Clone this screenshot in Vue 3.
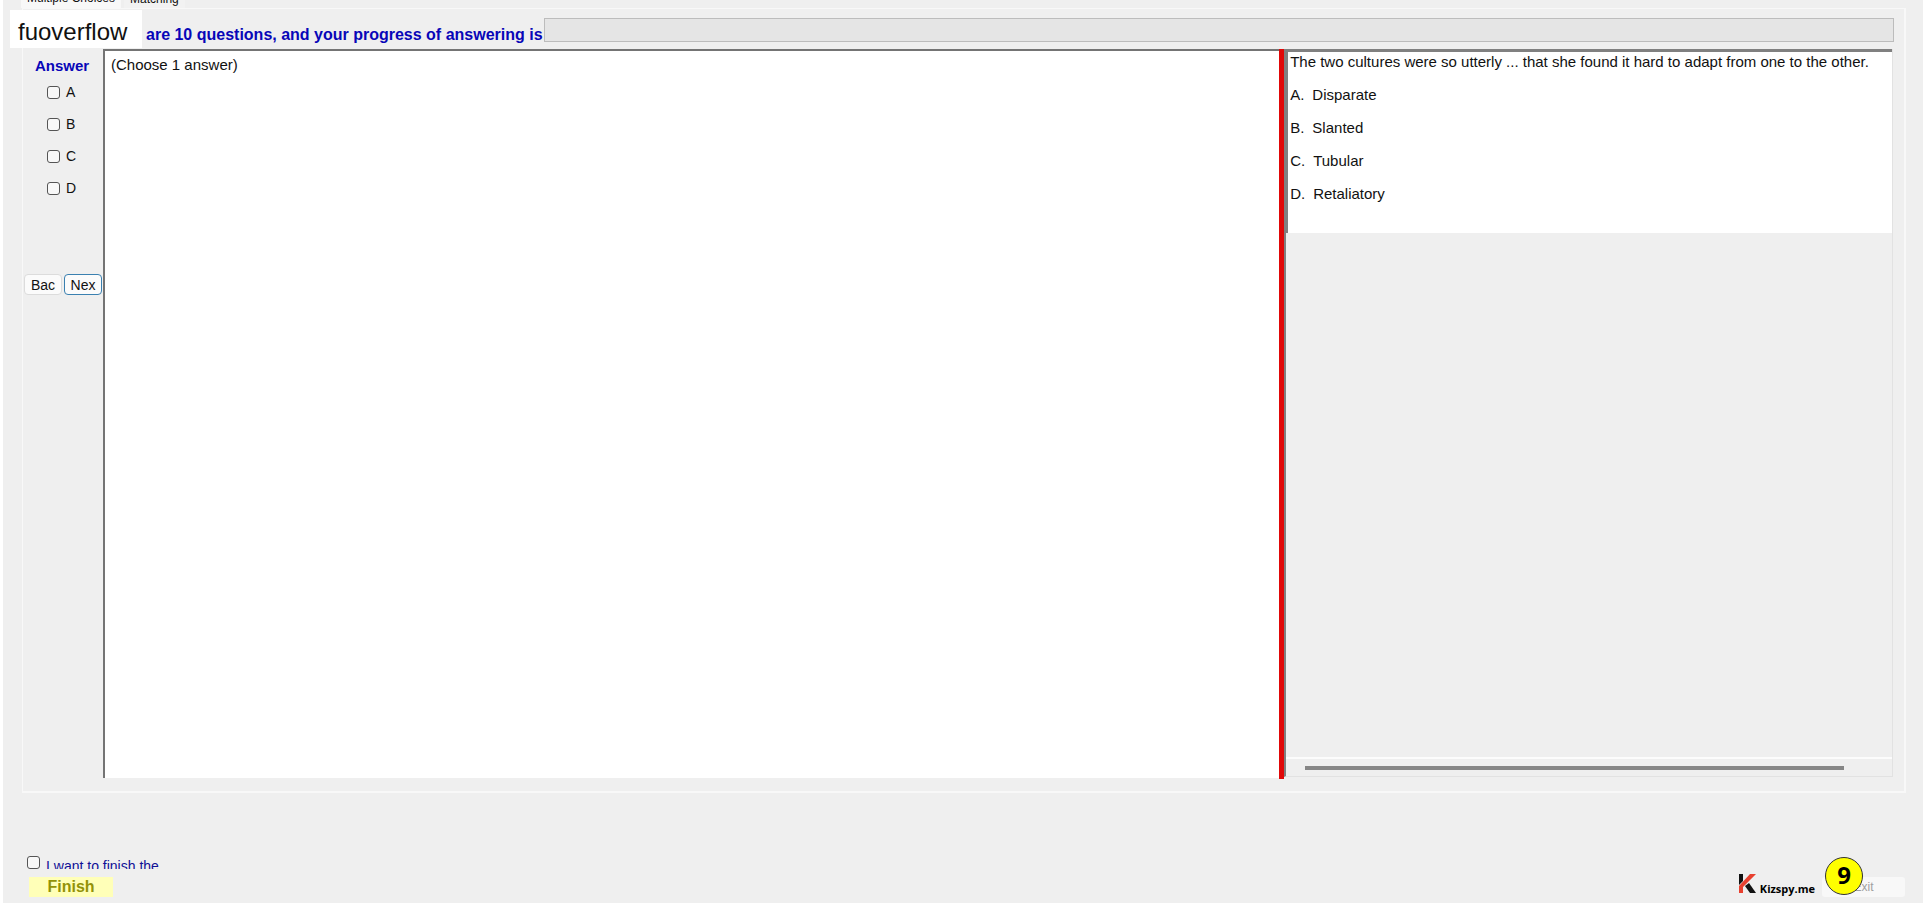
<script setup>
import { ref } from 'vue'

const tabs = ['Multiple Choices', 'Matching']
const activeTab = ref(0)
const options = [
  { key: 'A', text: 'Disparate' },
  { key: 'B', text: 'Slanted' },
  { key: 'C', text: 'Tubular' },
  { key: 'D', text: 'Retaliatory' },
]
const picked = ref([])
const finish = ref(false)
</script>

<template>
  <div class="window">
    <div class="surface">
      <nav class="tabs">
        <button
          v-for="(tab, i) in tabs"
          :key="tab"
          class="tab"
          :class="{ active: i === activeTab }"
          @click="activeTab = i"
        >{{ tab }}</button>
      </nav>

      <main class="page">
        <header class="head">
          <div class="brand">fuoverflow</div>
          <div class="summary">are 10 questions, and your progress of answering is</div>
          <div class="progress" role="progressbar" aria-label="Progress" aria-valuenow="0"></div>
        </header>

        <div class="body">
          <aside class="answers">
            <h2 class="title">Answer</h2>
            <label v-for="o in options" :key="o.key" class="choice">
              <input v-model="picked" class="tick" type="checkbox" :value="o.key">
              <span>{{ o.key }}</span>
            </label>
            <div class="moves">
              <button class="move">Bac</button>
              <button class="move next">Nex</button>
            </div>
          </aside>

          <section class="sheet">(Choose 1 answer)</section>
          <div class="splitter"></div>
          <section class="viewer">
            <div class="question">
              <p class="line">The two cultures were so utterly ... that she found it hard to adapt from one to the other.</p>
              <p v-for="o in options" :key="o.key" class="line option">
                <span>{{ o.key }}.</span><span>{{ o.text }}</span>
              </p>
            </div>
            <div class="scroll"><div class="thumb"></div></div>
          </section>
        </div>
      </main>

      <footer class="foot">
        <div class="finish">
          <label class="confirm">
            <input v-model="finish" class="tick" type="checkbox">
            <span class="confirm-text">I want to finish the</span>
          </label>
          <button class="finish-button">Finish</button>
        </div>
        <div class="corner">
          <div class="logo">
            <svg class="mark" viewBox="0 0 18 20" aria-hidden="true">
              <path d="M1 0h4v7L1 11z" fill="#111" />
              <path d="M12 0h6L5 13v6H1v-7z" fill="#e8402f" />
              <path d="M7 12l4-3 7 10h-6z" fill="#111" />
            </svg>
            <span class="logo-text">Kizspy.me</span>
          </div>
          <div class="exit-wrap">
            <button class="exit">Exit</button>
            <span class="badge">9</span>
          </div>
        </div>
      </footer>
    </div>
  </div>
</template>

<style>
body {
  margin: 0;
  background: #fff;
}
</style>

<style scoped>
.window {
  box-sizing: border-box;
  display: flex;
  min-height: 100vh;
  padding: 0 3px 3px;
  font-family: "Liberation Sans", Arial, sans-serif;
  font-size: 15px;
  color: #111;
}
.surface {
  flex: 1;
  min-width: 0;
  display: flex;
  flex-direction: column;
  background: #efefef;
}
button {
  box-sizing: border-box;
  margin: 0;
  padding: 0;
  font-family: inherit;
  color: inherit;
}
.tabs {
  display: flex;
  align-items: flex-end;
  gap: 3px;
  height: 8px;
  padding-left: 18px;
  overflow: hidden;
}
.tab {
  height: 18px;
  padding: 0 6px;
  border: 0;
  background: #f2f2f2;
  font-size: 12px;
  line-height: 18px;
}
.tab.active {
  height: 20px;
  background: #f8f8f8;
}
.page {
  flex: 1;
  display: flex;
  flex-direction: column;
  margin: 0 17px 0 19px;
  border: solid #f8f8f8;
  border-width: 1px 2px 2px 1px;
}
.head {
  display: flex;
  height: 40px;
  margin-left: -13px;
  padding-right: 10px;
}
.brand {
  box-sizing: border-box;
  width: 132px;
  height: 38px;
  margin-top: 1px;
  padding-left: 8px;
  background: #fff;
  font-size: 24px;
  line-height: 44px;
}
.summary {
  margin: 16px 1px 0 4px;
  font-size: 16px;
  font-weight: bold;
  line-height: 20px;
  white-space: nowrap;
  color: #0806b8;
}
.progress {
  box-sizing: border-box;
  flex: 1;
  height: 24px;
  margin-top: 9px;
  border: 1px solid #bcbcbc;
  background: #e5e5e5;
}
.body {
  flex: 1;
  display: flex;
  padding: 0 11px 12px 0;
}
.answers {
  flex: none;
  display: flex;
  flex-direction: column;
  width: 80px;
}
.title {
  margin: 8px 2px 9px 0;
  text-align: center;
  font-size: 15px;
  line-height: 18px;
  color: #0806b8;
}
.choice {
  display: flex;
  align-items: center;
  gap: 6px;
  height: 16px;
  margin: 0 0 16px 24px;
  font-size: 14px;
}
.tick {
  appearance: none;
  box-sizing: border-box;
  flex: none;
  width: 13px;
  height: 13px;
  margin: 0;
  border: 1px solid #555;
  border-radius: 3px;
  background: #f8f8f8;
}
.tick:checked {
  background: #3376b8;
}
.moves {
  display: flex;
  gap: 2px;
  margin: 62px 1px 0;
}
.move {
  flex: 1;
  height: 21px;
  border: 1px solid #dcdcdc;
  border-radius: 4px;
  background: #fbfbfb;
  font-size: 14px;
}
.move.next {
  border-color: #3a80b0;
}
.sheet {
  box-sizing: border-box;
  flex: 1174;
  min-width: 0;
  margin-bottom: 1px;
  padding: 4px 6px;
  border: solid #747474;
  border-width: 2px 0 0 2px;
  background: #fff;
  line-height: 20px;
}
.splitter {
  flex: none;
  width: 5px;
  background: #e00808;
}
.viewer {
  box-sizing: border-box;
  flex: 612;
  min-width: 0;
  display: flex;
  flex-direction: column;
  justify-content: space-between;
  margin-bottom: 2px;
  border: solid #e2e2e2;
  border-width: 0 1px 1px 2px;
  border-left-color: #808080;
}
.question {
  display: flex;
  flex-direction: column;
  gap: 15px;
  padding: 1px 2px 30px;
  border: solid #808080;
  border-width: 3px 0 0 2px;
  background: #fff;
}
.line {
  margin: 0;
  line-height: 18px;
  white-space: nowrap;
}
.option {
  display: flex;
  gap: 8px;
}
.scroll {
  padding: 7px 48px 6px 19px;
  border-top: 2px solid #fcfcfc;
}
.thumb {
  height: 4px;
  background: #868686;
}
.foot {
  box-sizing: border-box;
  display: flex;
  justify-content: space-between;
  align-items: flex-end;
  height: 110px;
  padding: 0 18px 6px 24px;
}
.finish {
  display: flex;
  flex-direction: column;
}
.confirm {
  display: flex;
  gap: 6px;
  height: 13px;
  margin-bottom: 8px;
  overflow: hidden;
}
.confirm-text {
  font-size: 14px;
  line-height: 20px;
  color: #101096;
}
.finish-button {
  width: 84px;
  height: 20px;
  margin-left: 2px;
  border: 0;
  background: #ffffb8;
  font-size: 16px;
  font-weight: bold;
  line-height: 20px;
  color: #929208;
}
.corner {
  display: flex;
  align-items: flex-end;
  gap: 7px;
}
.logo {
  display: flex;
  align-items: flex-end;
  gap: 4px;
  padding-bottom: 3px;
}
.mark {
  width: 18px;
  height: 20px;
}
.logo-text {
  font-family: "Open Sans", "Noto Sans", sans-serif;
  font-size: 11px;
  font-weight: 700;
  line-height: 11px;
  color: #000;
}
.exit-wrap {
  position: relative;
}
.exit {
  display: block;
  width: 83px;
  height: 20px;
  border: 0;
  border-radius: 3px;
  background: #f8f8f8;
  font-size: 12px;
  color: #a0a0a0;
}
.badge {
  position: absolute;
  left: 3px;
  bottom: 2px;
  box-sizing: border-box;
  width: 38px;
  height: 38px;
  border: 1px solid #333;
  border-radius: 50%;
  background: #ff0;
  text-align: center;
  font-family: "Open Sans", "Noto Sans", sans-serif;
  font-size: 24px;
  font-weight: bold;
  line-height: 34px;
  color: #000;
}
</style>
